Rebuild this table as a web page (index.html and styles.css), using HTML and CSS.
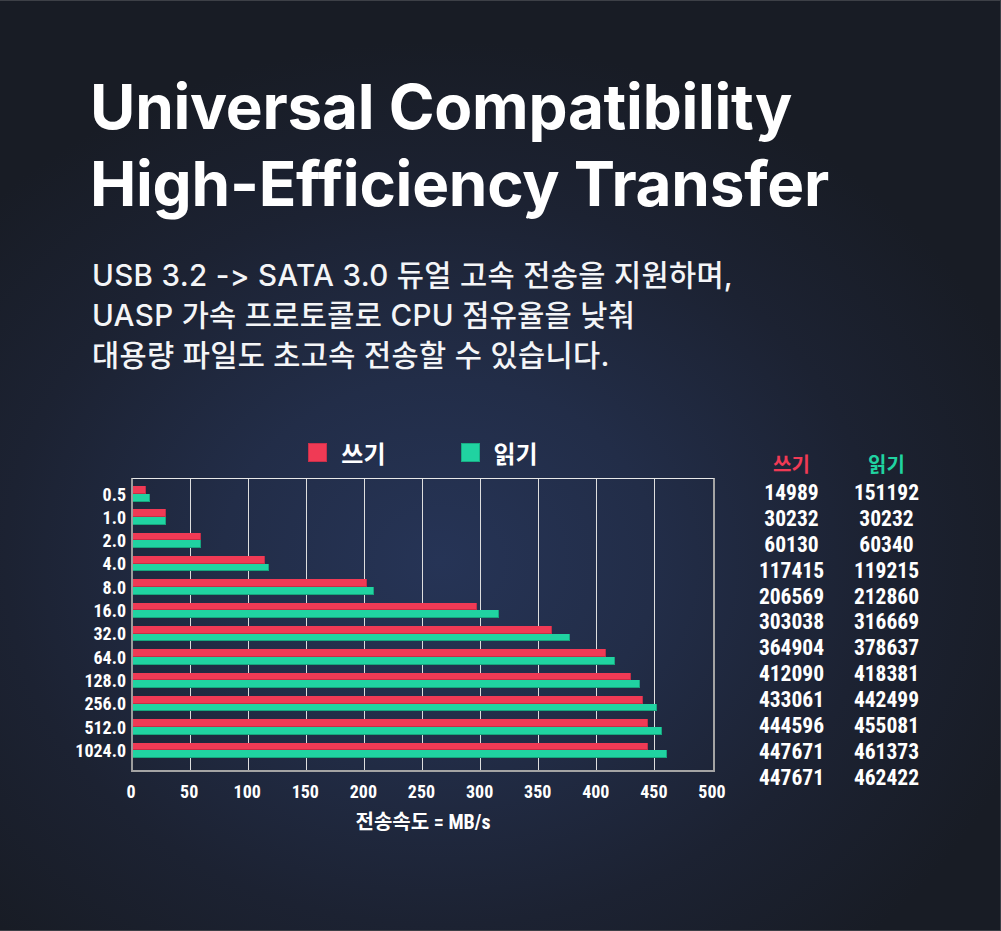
FILE: index.html
```html
<!DOCTYPE html>
<html lang="ko">
<head>
<meta charset="utf-8">
<title>Universal Compatibility</title>
<link rel="stylesheet" href="styles.css">
</head>
<body>
<main class="page">
  <header class="hero">
    <h1 class="title">Universal Compatibility<br>High-Efficiency Transfer</h1>
    <p class="lead">USB 3.2 -&gt; SATA 3.0 듀얼 고속 전송을 지원하며,<br>UASP 가속 프로토콜로 CPU 점유율을 낮춰<br>대용량 파일도 초고속 전송할 수 있습니다.</p>
  </header>
  <section class="bench">
    <div class="chart">
      <div class="legend">
        <span class="key"><i class="sw sw-w"></i>쓰기</span>
        <span class="key"><i class="sw sw-r"></i>읽기</span>
      </div>
      <div class="ylabels">
        <span>0.5</span><span>1.0</span><span>2.0</span><span>4.0</span><span>8.0</span><span>16.0</span>
        <span>32.0</span><span>64.0</span><span>128.0</span><span>256.0</span><span>512.0</span><span>1024.0</span>
      </div>
      <div class="plot">
        <div class="gridlines"><i></i><i></i><i></i><i></i><i></i><i></i><i></i><i></i><i></i><i></i></div>
        <div class="bars">
          <div class="pair"><b class="bar bw" style="width:13px"></b><b class="bar br" style="width:17px"></b></div>
          <div class="pair"><b class="bar bw" style="width:33px"></b><b class="bar br" style="width:33px"></b></div>
          <div class="pair"><b class="bar bw" style="width:68px"></b><b class="bar br" style="width:68px"></b></div>
          <div class="pair"><b class="bar bw" style="width:132px"></b><b class="bar br" style="width:136px"></b></div>
          <div class="pair"><b class="bar bw" style="width:234px"></b><b class="bar br" style="width:241px"></b></div>
          <div class="pair"><b class="bar bw" style="width:344px"></b><b class="bar br" style="width:366px"></b></div>
          <div class="pair"><b class="bar bw" style="width:419px"></b><b class="bar br" style="width:437px"></b></div>
          <div class="pair"><b class="bar bw" style="width:473px"></b><b class="bar br" style="width:482px"></b></div>
          <div class="pair"><b class="bar bw" style="width:498px"></b><b class="bar br" style="width:507px"></b></div>
          <div class="pair"><b class="bar bw" style="width:510px"></b><b class="bar br" style="width:524px"></b></div>
          <div class="pair"><b class="bar bw" style="width:515px"></b><b class="bar br" style="width:529px"></b></div>
          <div class="pair"><b class="bar bw" style="width:515px"></b><b class="bar br" style="width:534px"></b></div>
        </div>
      </div>
      <div class="xlabels">
        <span>0</span><span>50</span><span>100</span><span>150</span><span>200</span><span>250</span>
        <span>300</span><span>350</span><span>400</span><span>450</span><span>500</span>
      </div>
      <div class="xtitle">전송속도 = MB/s</div>
    </div>
    <div class="data">
      <div class="th th-w">쓰기</div><div class="th th-r">읽기</div>
      <div>14989</div><div>151192</div>
      <div>30232</div><div>30232</div>
      <div>60130</div><div>60340</div>
      <div>117415</div><div>119215</div>
      <div>206569</div><div>212860</div>
      <div>303038</div><div>316669</div>
      <div>364904</div><div>378637</div>
      <div>412090</div><div>418381</div>
      <div>433061</div><div>442499</div>
      <div>444596</div><div>455081</div>
      <div>447671</div><div>461373</div>
      <div>447671</div><div>462422</div>
    </div>
  </section>
</main>
</body>
</html>
```

FILE: styles.css
```css
html, body {
  margin: 0;
  padding: 0;
  background: #181c25;
}

.page {
  box-sizing: border-box;
  width: 1001px;
  height: 931px;
  overflow: hidden;
  border-top: 1px solid #3d4047;
  border-right: 1px solid #3d4047;
  border-bottom: 1px solid #3d4047;
  padding: 67px 0 0 90px;
  color: #ffffff;
  font-family: Inter, "Noto Sans CJK KR", sans-serif;
  background:
    radial-gradient(ellipse 620px 520px at 440px 560px, #263456 0%, #222d48 35%, #1c2232 70%, #181c25 100%);
}

.title {
  margin: 0;
  font-size: 62px;
  line-height: 77px;
  font-weight: 700;
  letter-spacing: -0.25px;
}

.lead {
  margin: 33px 0 0 2px;
  font-size: 29.5px;
  line-height: 40px;
  font-weight: 500;
  letter-spacing: 0.35px;
  color: #f4f5f7;
  font-feature-settings: "calt" 0, "liga" 0;
}

.bench {
  display: flex;
  align-items: flex-start;
  margin: 65px 0 0 -20px;
}

.chart {
  display: grid;
  grid-template-columns: 56px 584px;
  grid-template-rows: 38px 294px 40px 20px;
  column-gap: 5px;
}

.legend {
  grid-column: 2;
  grid-row: 1;
  display: flex;
  justify-content: center;
  align-items: center;
  gap: 75px;
  height: 24px;
  font-family: "Noto Sans CJK KR", sans-serif;
  font-weight: 700;
  font-size: 24px;
}

.key {
  display: flex;
  align-items: center;
  gap: 14px;
}

.sw {
  display: block;
  width: 19px;
  height: 19px;
  box-sizing: border-box;
}

.sw-w { background: #f03a55; border: 1px solid #c9304a; }
.sw-r { background: #20d3a1; border: 1px solid #19ad84; }

.ylabels {
  grid-column: 1;
  grid-row: 2;
  display: flex;
  flex-direction: column;
  gap: 7.83px;
  padding-top: 8.5px;
  text-align: right;
  font-family: Roboto, sans-serif;
  font-stretch: 75%;
  font-weight: 700;
  font-size: 18px;
}

.ylabels span {
  display: block;
  height: 15.5px;
  line-height: 15.5px;
}

.plot {
  grid-column: 2;
  grid-row: 2;
  box-sizing: border-box;
  height: 294px;
  border-top: 1.5px solid #e8e8e8;
  border-left: 2px solid #9c9c9c;
  border-right: 2px solid #a4a4a4;
  border-bottom: 2px solid #a4a4a4;
  display: grid;
}

.gridlines,
.bars {
  grid-area: 1 / 1;
}

.gridlines {
  display: flex;
}

.gridlines i {
  box-sizing: border-box;
  width: 58px;
  border-right: 1.5px solid #dedede;
}

.gridlines i:last-child {
  border-right: 0;
}

.bars {
  display: flex;
  flex-direction: column;
  gap: 7.83px;
  padding-top: 7px;
}

.pair {
  display: flex;
  flex-direction: column;
}

.bar {
  display: block;
  height: 7.75px;
  box-sizing: border-box;
}

.bw { background: #f03a55; box-shadow: inset -1px 0 0 #c32f49, inset 0 -1px 0 rgba(150, 30, 50, 0.45); }
.br { background: #20d3a1; box-shadow: inset -1px 0 0 #17a67f, inset 0 -1px 0 rgba(10, 110, 80, 0.45); }

.xlabels {
  grid-column: 2;
  grid-row: 3;
  justify-self: start;
  margin-left: -29px;
  display: grid;
  grid-template-columns: repeat(11, 58.1px);
  text-align: center;
  line-height: 40px;
  font-family: Roboto, sans-serif;
  font-stretch: 75%;
  font-weight: 700;
  font-size: 18px;
}

.xtitle {
  grid-column: 2;
  grid-row: 4;
  text-align: center;
  line-height: 20px;
  font-family: Roboto, "Noto Sans CJK KR", sans-serif;
  font-stretch: 75%;
  font-weight: 700;
  font-size: 20px;
}

.data {
  display: grid;
  grid-template-columns: 95px 95px;
  grid-template-rows: 28px repeat(12, 25.9px);
  margin: 12px 0 0 29px;
  text-align: center;
  font-family: Roboto, sans-serif;
  font-stretch: 75%;
  font-weight: 700;
  font-size: 21.5px;
  line-height: 25.9px;
}

.th {
  line-height: 24px;
  font-family: "Noto Sans CJK KR", sans-serif;
  font-size: 20px;
}

.th-w { color: #f03a55; }
.th-r { color: #20d3a1; }
```
